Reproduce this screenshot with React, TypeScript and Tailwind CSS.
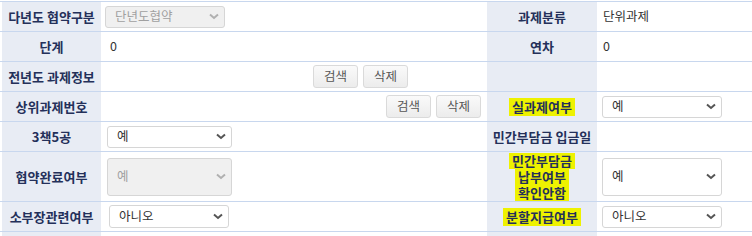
import type { ReactNode } from "react";

const FONT = { fontFamily: '"Noto Sans CJK KR", "Noto Sans", sans-serif' };

function Label({ children }: { children?: ReactNode }) {
  return (
    <div className="flex items-center justify-center bg-[#e8ecf4] text-center text-[13px] font-bold leading-[16px] text-[#24305a]">
      {children}
    </div>
  );
}

function Mark({ children }: { children: ReactNode }) {
  return <span className="bg-[#eef200] px-[3px] py-[1px]">{children}</span>;
}

function Chevron({ disabled }: { disabled?: boolean }) {
  return (
    <svg width="10" height="7" viewBox="0 0 10 7" className="shrink-0">
      <polyline
        points="1,1.5 5,5 9,1.5"
        fill="none"
        stroke={disabled ? "#b0b0b0" : "#555"}
        strokeWidth="2"
      />
    </svg>
  );
}

function Select({
  value,
  disabled,
  className,
}: {
  value: string;
  disabled?: boolean;
  className: string;
}) {
  return (
    <div
      className={`flex items-center justify-between rounded-[3px] border border-[#d6d6d6] pl-[9px] pr-[5px] text-[12.5px] ${
        disabled ? "bg-[#f0f0f0] text-[#a0a0a0]" : "bg-white text-[#333]"
      } ${className}`}
    >
      <span>{value}</span>
      <Chevron disabled={disabled} />
    </div>
  );
}

function Btn({ children }: { children: ReactNode }) {
  return (
    <button
      type="button"
      className="flex h-[23px] w-[45px] items-center justify-center rounded-[3px] border border-[#dadada] bg-gradient-to-b from-[#fafafa] to-[#ececec] text-[12.5px] text-[#555]"
    >
      {children}
    </button>
  );
}

const ROW = "grid grid-cols-[99px_386px_110px_1fr] border-b border-[#c8d7ee] pl-[2px]";

export default function App() {
  return (
    <div className="h-[236px] w-[752px] overflow-hidden bg-white" style={FONT}>
      <div className="mt-[1px] border-t border-[#c8d7ee]">
        <div className={`${ROW} h-[30px]`}>
          <Label>다년도 협약구분</Label>
          <div className="flex items-center pl-[4px]">
            <Select value="단년도협약" disabled className="h-[22px] w-[120px]" />
          </div>
          <Label>과제분류</Label>
          <div className="flex items-center pl-[6px] text-[12.5px] text-[#333]">단위과제</div>
        </div>

        <div className={`${ROW} h-[30px]`}>
          <Label>단계</Label>
          <div className="flex items-center pl-[9px] text-[12.5px] text-[#333]">0</div>
          <Label>연차</Label>
          <div className="flex items-center pl-[6px] text-[12.5px] text-[#333]">0</div>
        </div>

        <div className={`${ROW} h-[30px]`}>
          <Label>전년도 과제정보</Label>
          <div className="flex items-center gap-[5px] pl-[212px]">
            <Btn>검색</Btn>
            <Btn>삭제</Btn>
          </div>
          <Label />
          <div />
        </div>

        <div className={`${ROW} h-[30px]`}>
          <Label>상위과제번호</Label>
          <div className="flex items-center justify-end gap-[5px] pr-[6px]">
            <Btn>검색</Btn>
            <Btn>삭제</Btn>
          </div>
          <Label>
            <Mark>실과제여부</Mark>
          </Label>
          <div className="flex items-center pl-[5px]">
            <Select value="예" className="h-[22px] w-[120px]" />
          </div>
        </div>

        <div className={`${ROW} h-[30px]`}>
          <Label>3책5공</Label>
          <div className="flex items-center pl-[6px]">
            <Select value="예" className="h-[22px] w-[125px]" />
          </div>
          <Label>민간부담금 입금일</Label>
          <div />
        </div>

        <div className={`${ROW} h-[50px]`}>
          <Label>협약완료여부</Label>
          <div className="flex items-center pl-[6px]">
            <Select value="예" disabled className="h-[38px] w-[125px]" />
          </div>
          <Label>
            <div className="flex flex-col items-center">
              <span className="bg-[#eef200] px-[3px] leading-[16px]">민간부담금</span>
              <span className="bg-[#eef200] px-[3px] leading-[16px]">납부여부</span>
              <span className="bg-[#eef200] px-[3px] leading-[16px]">확인안함</span>
            </div>
          </Label>
          <div className="flex items-center pl-[5px]">
            <Select value="예" className="h-[38px] w-[120px]" />
          </div>
        </div>

        <div className={`${ROW} h-[30px]`}>
          <Label>소부장관련여부</Label>
          <div className="flex items-center pl-[8px]">
            <Select value="아니오" className="h-[23px] w-[120px]" />
          </div>
          <Label>
            <Mark>분할지급여부</Mark>
          </Label>
          <div className="flex items-center pl-[5px]">
            <Select value="아니오" className="h-[22px] w-[120px]" />
          </div>
        </div>

        <div className={`${ROW} h-[30px]`}>
          <Label />
          <div />
          <Label />
          <div />
        </div>
      </div>
    </div>
  );
}
